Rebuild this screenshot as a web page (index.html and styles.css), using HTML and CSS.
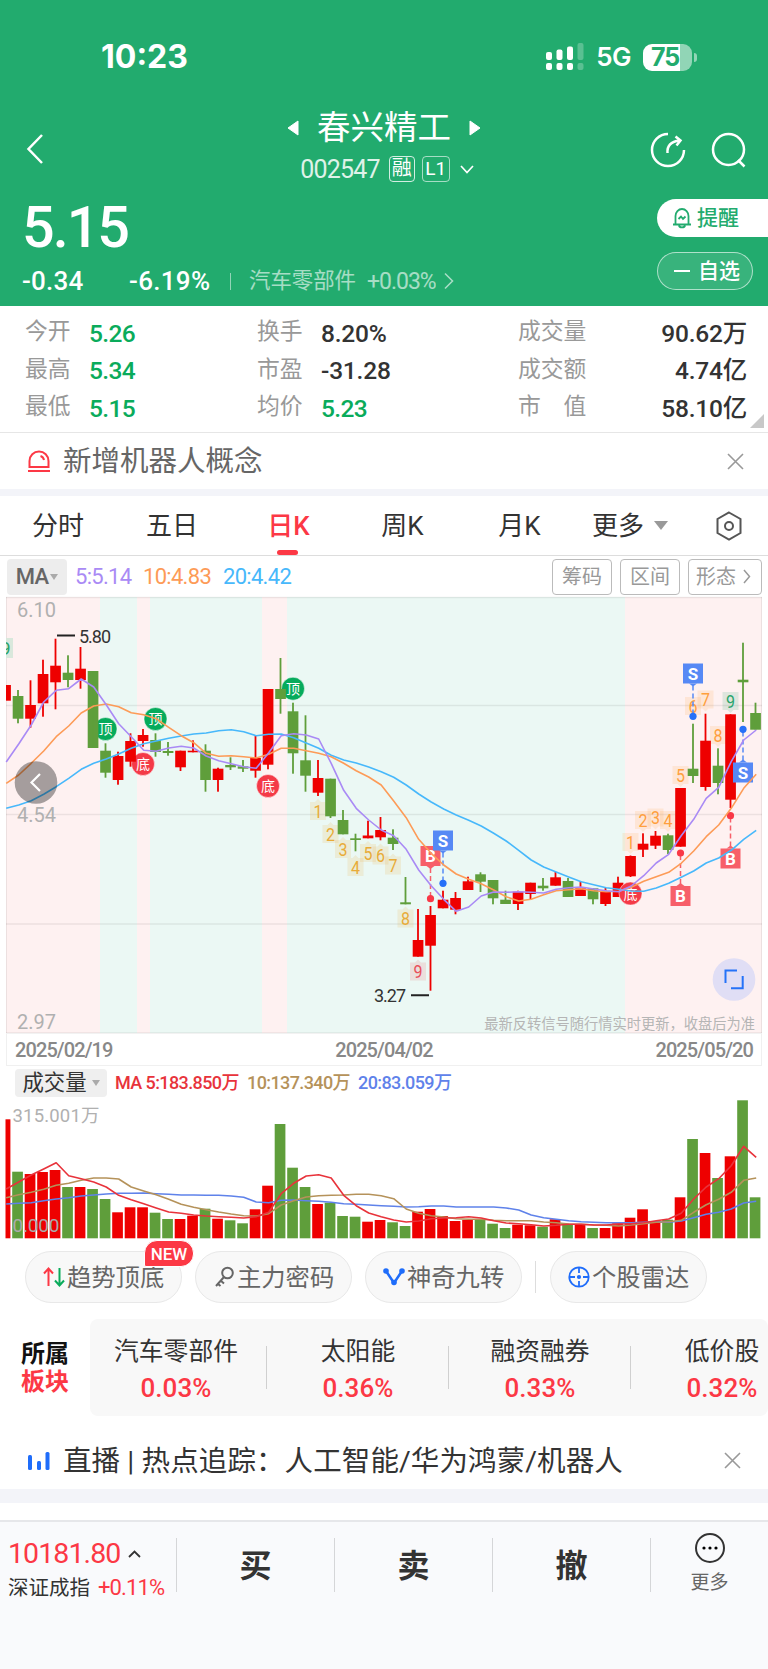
FILE: index.html
```
<!DOCTYPE html>
<html lang="zh-CN">
<head>
  <meta charset="UTF-8">
  <meta name="viewport" content="width=device-width, initial-scale=1.0">
  <title>春兴精工 002547</title>
  <link rel="stylesheet" href="styles.css">
</head>
<body>
  <header class="header">
    <div class="status-bar">
      <span class="clock">10:23</span>
      <div class="status-icons">
        <svg class="signal" width="38" height="28" viewBox="0 0 38 28" fill="#fff">
          <rect x="0" y="9" width="6" height="8" rx="2"/><rect x="0" y="20" width="6" height="7" rx="2"/>
          <rect x="10.5" y="6.500" width="6" height="10.500" rx="2"/><rect x="10.500" y="20" width="6" height="7" rx="2"/>
          <rect x="21" y="3.500" width="6" height="13.500" rx="2"/><rect x="21" y="20" width="6" height="7" rx="2"/>
          <g opacity=".25"><rect x="31.500" y="0" width="6" height="17" rx="2"/><rect x="31.500" y="20" width="6" height="7" rx="2"/></g>
        </svg>
        <span class="network">5G</span>
        <div class="battery">75</div>
      </div>
    </div>

    <div class="nav">
      <svg class="back" width="18" height="32" viewBox="0 0 18 32"><path d="M16 2L2.500 16L16 30"/></svg>
      <div class="stock">
        <div class="stock-name">
          <svg width="12" height="16" viewBox="0 0 12 16"><path d="M11 1v14L1 8z"/></svg>
          <span>春兴精工</span>
          <svg width="12" height="16" viewBox="0 0 12 16"><path d="M1 1v14L11 8z"/></svg>
        </div>
        <div class="stock-code">
          <span class="code">002547</span>
          <span class="tag">融</span>
          <span class="tag tag-level">L1</span>
          <svg width="14" height="9" viewBox="0 0 14 9"><path d="M1 1l6 6.500L13 1"/></svg>
        </div>
      </div>
      <div class="nav-actions">
        <svg width="36" height="36" viewBox="0 0 36 36"><path d="M18 2A16 16 0 1 0 34 18M17.500 21c-.5-7 3-11.500 12-12.500M25.500 4.500l5 4-4 5"/></svg>
        <svg width="36" height="36" viewBox="0 0 36 36"><circle cx="17.500" cy="17.500" r="15.500"/><path d="M27 28l6.500 6.500"/></svg>
      </div>
    </div>

    <div class="quote">
      <div class="quote-main">
        <div class="price">5.15</div>
        <div class="change">
          <span class="diff">-0.34</span>
          <span class="percent">-6.19%</span>
          <span class="bar"></span>
          <span class="industry">汽车零部件</span>
          <span class="industry-change">+0.03%</span>
          <svg width="10" height="18" viewBox="0 0 10 18"><path d="M1 1.500l7.500 7.500L1 16.500"/></svg>
        </div>
      </div>
      <div class="quote-actions">
        <div class="btn-alert">
          <svg width="20" height="22" viewBox="0 0 20 22"><path d="M1 17.500h18M3.500 17V9a6.500 7 0 0 1 13 0v8M7 18.500c.5 2.500 5.500 2.500 6 0M6.500 12l2.500-2.500 2 2.500 2.500-2.500"/></svg>提醒
        </div>
        <div class="btn-watch"><i></i>自选</div>
      </div>
    </div>
  </header>

  <section class="stats">
    <span>今开</span><b class="down">5.26</b><span>换手</span><b>8.20%</b><span>成交量</span><b>90.62万</b>
    <span>最高</span><b class="down">5.34</b><span>市盈</span><b>-31.28</b><span>成交额</span><b>4.74亿</b>
    <span>最低</span><b class="down">5.15</b><span>均价</span><b class="down">5.23</b><span>市　值</span><b>58.10亿</b>
  </section>

  <section class="notice">
    <svg class="notice-icon" width="22" height="22" viewBox="0 0 22 22" fill="none" stroke="#fc3845" stroke-width="2"><path d="M1.500 17v-6a9.500 9.500 0 0 1 19 0v6zM0 21h22M12.500 6q3 1 3.500 4"/></svg>
    <span>新增机器人概念</span>
    <svg class="close" width="17" height="17" viewBox="0 0 17 17"><path d="M1 1l15 15M16 1L1 16"/></svg>
  </section>

  <nav class="tabs">
    <a>分时</a><a>五日</a><a class="active">日K</a><a>周K</a><a>月K</a>
    <a class="more">更多<i class="caret"></i></a>
    <svg width="26" height="30" viewBox="0 0 26 30"><path d="M13 1.500L24.500 8v14L13 28.500 1.500 22V8z"/><circle cx="13" cy="15" r="4"/></svg>
  </nav>

  <section class="ma-bar">
    <span class="ma-select">MA<i class="caret"></i></span>
    <span class="ma5">5:5.14</span>
    <span class="ma10">10:4.83</span>
    <span class="ma20">20:4.42</span>
    <div class="ma-tools">
      <span>筹码</span><span>区间</span>
      <span>形态<svg width="8" height="15" viewBox="0 0 8 15"><path d="M1 1l5.500 6.500L1 14"/></svg></span>
    </div>
  </section>

  <svg id="kline" class="kline" width="768" height="438" viewBox="0 596 768 438"></svg>

  <div class="dates"><span>2025/02/19</span><span>2025/04/02</span><span>2025/05/20</span></div>

  <section class="volume">
    <div class="volume-head">
      <span class="volume-select">成交量<i class="caret"></i></span>
      <span class="vol5">MA 5:183.850万</span>
      <span class="vol10">10:137.340万</span>
      <span class="vol20">20:83.059万</span>
    </div>
    <svg id="volume" width="768" height="140" viewBox="0 1099 768 140"></svg>
  </section>

  <section class="tools">
    <div class="tool">
      <svg width="22" height="22" viewBox="0 0 22 22" fill="none" stroke-width="2"><path stroke="#fc3845" d="M5.500 20V3M1 7.500L5.500 2.500 10 7.500"/><path stroke="#0aab5b" d="M16.500 2v17M12 14.500l4.500 5 4.500-5"/></svg><span>趋势顶底</span>
      <em class="new">NEW</em>
    </div>
    <div class="tool">
      <svg width="20" height="22" viewBox="0 0 20 22" fill="none" stroke="#666" stroke-width="2"><circle cx="12.500" cy="7" r="5.300"/><path d="M9 11L1 20M5.500 14.500l3.500 3M2.500 17.500l3 2.500"/></svg><span>主力密码</span>
    </div>
    <div class="tool">
      <svg width="22" height="20" viewBox="0 0 22 20" fill="#1f6dfa"><path d="M3 4l8 12 8-12" fill="none" stroke="#1f6dfa" stroke-width="2.500"/><circle cx="3" cy="4" r="2.800"/><circle cx="19" cy="4" r="2.800"/><circle cx="11" cy="15.500" r="2.800"/></svg><span>神奇九转</span>
    </div>
    <i class="split"></i>
    <div class="tool">
      <svg width="22" height="22" viewBox="0 0 22 22" fill="none" stroke="#1f6dfa" stroke-width="1.800"><circle cx="11" cy="11" r="9.700"/><path d="M11 1v6M11 15v6M1 11h6M15 11h6"/><circle cx="11" cy="11" r="1.200" fill="#1f6dfa"/></svg><span>个股雷达</span>
    </div>
  </section>

  <section class="sectors">
    <div class="sectors-title">所属<br><span>板块</span></div>
    <div class="sectors-list">
      <div class="sector">汽车零部件<b>0.03%</b></div>
      <div class="sector">太阳能<b>0.36%</b></div>
      <div class="sector">融资融券<b>0.33%</b></div>
      <div class="sector">低价股<b>0.32%</b></div>
    </div>
  </section>

  <section class="notice live">
    <svg class="notice-icon" width="22" height="18" viewBox="0 0 22 18" fill="#1f6dfa"><rect x="0" y="3" width="4" height="15" rx="1.500"/><rect x="9" y="9" width="4" height="9" rx="1.500"/><rect x="17.500" y="0" width="4" height="18" rx="1.500"/></svg>
    <span>直播 | 热点追踪：人工智能/华为鸿蒙/机器人</span>
    <svg class="close" width="17" height="17" viewBox="0 0 17 17"><path d="M1 1l15 15M16 1L1 16"/></svg>
  </section>

  <footer class="footer">
    <div class="index">
      <div class="index-value">10181.80<svg width="13" height="8" viewBox="0 0 13 8"><path d="M1 7l5.500-5.500L12 7"/></svg></div>
      <div class="index-name">深证成指<span>+0.11%</span></div>
    </div>
    <div class="trade">买</div>
    <div class="trade">卖</div>
    <div class="trade">撤</div>
    <div class="footer-more">
      <svg width="32" height="32" viewBox="0 0 32 32"><circle cx="16" cy="16" r="14" fill="none" stroke="#333" stroke-width="2"/><circle cx="10" cy="16" r="1.600"/><circle cx="16" cy="16" r="1.600"/><circle cx="22" cy="16" r="1.600"/></svg>
      更多
    </div>
  </footer>

  <script>
    const RED = '#ee0000', GREEN = '#5f9e3b';
    const px = i => 5.5 + 12.5 * i;

    // [color, body top, body bottom, high, low]
    const candles = [
      ['r',685,700.7,685,700.7],['g',696,718.7,690,723.3],['r',705,718.7,680.3,727.7],['r',674,703.3,659.7,716.7],
      ['r',665.7,682.3,638.7,709.3],['g',672.7,680,655.3,687.3],['r',668.7,680,647,688.7],['g',671,748,671,748],
      ['g',750.7,772.7,743.3,777.7],['r',756,780,751.7,784.7],['r',741,761.7,733.3,766.7],['r',735,741,729,746.7],
      ['g',740,752,733.3,756.7],['g',751,753,742,755.7],['r',750.7,767.3,750.7,771],['r',750.7,752.3,740.3,752.3],
      ['g',750.7,780,744.3,791.7],['r',768.7,780,767.7,791.7],['g',765,767.3,757.3,770],['g',766.3,768.7,760,772],
      ['r',758,770.7,736,777.7],['r',689,764.7,689,769.3],['g',689,699,658,713.7],['g',711.3,753.3,702.7,773.7],
      ['g',760.3,775.7,715.3,791.7],['r',778,792.7,760,796],['g',778.7,816.3,778.7,818],['g',820,834.3,810,834.3],
      ['g',838.3,840,833.7,851.3],['r',835.5,838.3,820.7,838.3],['r',830,837.3,817,840.3],['g',837.7,844,829.3,850],
      ['g',902.3,904.3,877,904.3],['r',940,956.7,909,956.7],['r',915,945.7,906,990.7],['r',899.7,908.3,890.7,908.3],
      ['r',898,909.7,892,914.3],['r',881.3,890,876.7,890],['g',874.3,881.7,872.3,892],['g',880,898.3,880,904.3],
      ['g',899.7,904,890.7,904],['r',891.7,904,890.7,910],['r',882.7,894,882.7,899.3],['g',885.7,888.3,878,890.7],
      ['r',877.3,885.7,872,885.7],['g',881,897,878,897],['r',888.3,896,881.3,896],['g',888.3,899.3,888.3,904.3],
      ['r',891.7,904,888,906],['r',882.7,897,876.7,897],['r',856,876.3,855.5,877],['r',843.7,849.7,833.3,857],
      ['r',835.7,845.7,831,849],['g',835.3,850,833.7,854],['r',788,846.7,788,846.7],['g',768.7,776,723.7,783],
      ['r',740.7,787,713.7,790.7],['g',765.7,783,748.3,794.3],['r',714.3,799.7,714.3,808],['g',679.7,682.3,642.7,722],
      ['g',713,729.7,702.7,729.7]
    ];
    const ma5 = [762,744,725,702,690.3,688.7,679,687,704.7,723.7,736.7,750.3,751.3,748,746.3,748,756,760.7,763.7,766.7,768.3,752.7,735.7,733.7,735,739,763.3,790.3,808.3,820,830,835.7,849.3,870,885.7,899.3,911.3,907,896,892,892.3,891.7,892.3,893,889.3,887.7,887,889,890.7,891.7,886,875.7,863,854.3,835.7,819.3,798.3,787.3,761.7,740,730];
    const ma10 = [783.3,775,763.3,751,736.7,726,713,706,704,706.7,712.7,714.7,718.7,727.3,735.7,742.7,753.3,756.3,755.7,756.7,758,754.3,748.3,748.3,750.7,753.3,756.7,763.3,770.7,777,785,801,817.7,839.3,853.3,865,874,879.3,883.7,890,896.7,901,899.3,894.7,890.7,889.7,888.7,890.7,891.7,891.3,887.3,881.3,876.7,872.3,863.3,851,836.7,825,808.3,788.3,774.3];
    const ma20 = [808.3,805,800.7,794.3,786.7,778.3,769.3,763.3,759,754,748.3,743.7,741,738.3,736,734,733,730.7,729.7,731.7,735.7,734.3,734,737.7,743,748.3,755.3,760,763,767,771.7,777.3,785,794,802,809,815,820.3,826,833.3,841,850.3,860,867,872,877,881.7,884.7,887.7,889.3,891,891.3,888,883.3,877.3,871,863,858,850.3,839.3,830.3];

    const line = (ys, color) => `<polyline points="${ys.map((y, i) => (px(i) + 0.7) + ',' + y).join(' ')}" fill="none" stroke="${color}" stroke-width="1.6" stroke-linejoin="round"/>`;
    const text = (x, y, s, size, color, extra = '') => `<text x="${x}" y="${y}" font-size="${size}" fill="${color}" ${extra}>${s}</text>`;
    const mid = 'text-anchor="middle"';

    let k = '';
    [[6,99.5,0],[99.5,137,1],[137,149.5,0],[149.5,261.7,1],[261.7,287,0],[287,624.5,1],[624.5,762,0]].forEach(([a, b, g]) => {
      k += `<rect x="${a}" y="597" width="${b - a}" height="436" fill="${g ? '#ebf8f4' : '#fef1f1'}" shape-rendering="crispEdges"/>`;
    });
    [597.5, 705.5, 814.5, 924, 1033].forEach(y => k += `<path d="M6 ${y}H762" stroke="#000" stroke-opacity=".07" stroke-width="1.5"/>`);
    k += '<path d="M6.500 597V1033M761.500 597V1033" stroke="#000" stroke-opacity=".07"/>';
    k += text(17, 617, '6.10', 20, '#b0b0b0') + text(17, 822, '4.54', 20, '#b0b0b0') + text(17, 1028.5, '2.97', 20, '#b0b0b0');
    k += text(755, 1029, '最新反转信号随行情实时更新，收盘后为准', 14.25, '#b5b5b5', 'text-anchor="end"');

    // top / bottom signals
    const round = (x, y, s) => `<circle cx="${x}" cy="${y}" r="11.500" fill="${s === '底' ? '#f43a47' : '#06ab5c'}" stroke="#fff" stroke-opacity=".5"/>` + text(x, y + 5, s, 14, '#fff', mid);
    k += round(105.5, 729, '顶') + round(155.5, 719, '顶') + round(143, 764, '底') + round(268, 786, '底') + round(293, 688.7, '顶');

    // nine-turn numbers
    const turn = (i, y, s, color, up) => {
      const x = px(i);
      return `<path d="M${x - 8} ${y - 9}h16v18h-16z" fill="${color}" fill-opacity=".15"/><path d="M${x - 3} ${up ? y - 9 : y + 9}l3 ${up ? -3 : 3} 3 ${up ? 3 : -3}z" fill="${color}" fill-opacity=".15"/>` + text(x - 4.5, y + 6.8, s, 18.5, color, 'textLength="9" lengthAdjust="spacingAndGlyphs"');
    };
    [[25,811],[26,834],[27,849],[28,867],[29,853],[30,855.5],[31,865.5],[32,918.5]].forEach(([i, y], n) => k += turn(i, y, n + 1, '#e8ab38', 1));
    k += turn(33, 971.5, 9, '#e8505a', 1);
    [[50,842],[51,820],[52,817.5],[53,820],[54,775],[55,706],[56,699.5],[57,735]].forEach(([i, y], n) => k += turn(i, y, n + 1, '#ff9f3d', 0));
    k += turn(58, 701, 9, '#2aa46c', 0);
    k += '<path d="M6 638h7v20H6z" fill="#d9e8dc"/><svg x="6" y="630" width="10" height="34">' + '<text x="-6" y="25" font-size="19" fill="#2aa46c">9</text></svg>';

    candles.forEach(([c, top, bottom, high, low], i) => {
      const color = c === 'r' ? RED : GREEN;
      const left = Math.max(6, px(i) - 5.3);
      k += `<rect x="${left}" y="${top}" width="${px(i) + 5.4 - left}" height="${bottom - top}" fill="${color}"/>`;
      if (i) k += `<rect x="${px(i) - 0.9}" y="${high}" width="1.800" height="${low - high}" fill="${color}"/>`;
    });
    k += round(630.5, 893.5, '底');

    // buy / sell flags
    const flag = (i, y, dot, s) => {
      const x = px(i), color = s === 'S' ? '#5689f5' : '#f75f69', dir = dot > y ? 1 : -1;
      return `<path d="M${x} ${y + dir * 12}V${dot}" stroke="${color}" stroke-width="1.500" stroke-dasharray="5 3"/>` +
        `<circle cx="${x}" cy="${dot}" r="3.600" fill="${s === 'S' ? '#2670f8' : '#f93846'}"/>` +
        `<rect x="${x - 10}" y="${y - 10}" width="20" height="20" fill="${color}"/><path d="M${x - 4} ${y + dir * 10}l4 ${dir * 3} 4 ${-dir * 3}z" fill="${color}"/>` +
        text(x, y + 6, s, 17, '#fff', mid + ' font-weight="700"');
    };
    k += flag(34, 856, 898.7, 'B') + flag(35, 840.5, 883.3, 'S') + flag(54, 896, 853, 'B') + flag(55, 673.5, 716.3, 'S') + flag(58, 858.5, 815.7, 'B') + flag(59, 772.5, 729.3, 'S');

    k += line(ma20, '#47b8fb') + line(ma10, '#fd9b57') + line(ma5, '#a98af5');
    k += '<path d="M57 635.500h18M411 995.300h18" stroke="#222" stroke-width="2"/>';
    k += text(79, 643, '5.80', 18, '#333', 'textLength="32"') + text(374, 1002, '3.27', 18, '#333', 'textLength="32"');
    k += '<circle cx="36" cy="782.500" r="21.300" fill="#000" fill-opacity=".35"/><path d="M40 774l-8.500 8.500 8.500 8.500" fill="none" stroke="#fff" stroke-width="2.200"/>';
    k += '<circle cx="734" cy="979.500" r="21.300" fill="#e0def5"/><path d="M725.500 983v-12.500H737M742.700 976v12.200H731" fill="none" stroke="#2472f8" stroke-width="2"/>';
    document.getElementById('kline').innerHTML = k;

    const bars = [1119.3,1171.7,1174,1172,1170,1187,1187,1189,1199,1212.3,1207.3,1207.3,1212.7,1219,1219,1215.7,1208.7,1218.7,1220.3,1223.3,1209.3,1185.7,1124,1167.7,1187,1204,1202.7,1216,1216.7,1221.7,1220,1222.3,1226,1211.7,1209,1216,1221,1220,1219.7,1223.7,1228,1224.7,1225.3,1226.7,1219.3,1224.3,1224.7,1228,1228,1223.3,1217.7,1209.3,1221,1219.7,1197.3,1139,1153,1178,1156.3,1100.3,1197.3];
    const vol5 = [1189,1182,1175,1169,1162.7,1175.7,1178.7,1182,1187,1195.3,1199.7,1203.7,1208,1212,1213.3,1215,1216,1216.7,1217.3,1218,1216.7,1212.3,1193.7,1183.3,1176,1174.7,1178,1195.3,1205.7,1213,1216.7,1220,1222,1221,1218.7,1218,1217.7,1216.7,1218,1220.7,1223,1223.7,1224.7,1226,1225.3,1224.3,1224.3,1225,1225,1224,1223.7,1222.7,1220.7,1219,1213.3,1199,1187,1178.7,1165.7,1146.3,1157.3];
    const vol10 = [1197.7,1194.7,1192.3,1189.3,1185.3,1183.3,1180.3,1178,1178,1179,1187,1191,1194.7,1199.3,1204.3,1207.3,1209.7,1212,1214,1215.7,1216,1213.7,1205,1200.7,1197,1195.7,1195.3,1195,1194.3,1194.3,1195.7,1198.7,1209,1213.3,1215.7,1217,1218.7,1219.3,1219.3,1220.3,1220.7,1220.7,1220.7,1222,1222.7,1224,1224.3,1225,1225.3,1226,1225,1223.7,1222.3,1221.7,1220.3,1212.3,1204.7,1199.3,1192.3,1180.3,1178];
    const vol20 = [1204,1203.3,1202.7,1200.7,1199,1197.7,1196,1195,1194,1193.3,1193.3,1193,1193.7,1194.3,1195,1195,1195.3,1195.3,1196,1197.3,1202,1202.7,1200.3,1200,1200.7,1201.3,1202.3,1203.7,1204.3,1205,1205.7,1206.3,1207,1206.7,1206,1206,1207,1207,1207,1207,1208,1210,1215,1217.7,1219.3,1220.7,1221.7,1222.3,1222.7,1222.7,1222.7,1222.3,1221.7,1222.3,1221,1217.7,1214.3,1212.3,1209,1203,1201.3];
    let v = '';
    bars.forEach((y, i) => {
      const left = Math.max(5.5, px(i) - 5.8);
      // volume bars share the candle colors
      v += `<rect x="${left}" y="${y}" width="${px(i) + 4.9 - left}" height="${1238.3 - y}" fill="${candles[i][0] === 'r' ? RED : GREEN}"/>`;
    });
    v += line(vol20, '#5f82ea') + line(vol10, '#b5925a') + line(vol5, '#e8333b');
    v += text(12.5, 1121.5, '315.001万', 18.5, '#b0b0b0', 'textLength="87"') + text(12.5, 1231.5, '0.000', 19, '#aaa', 'textLength="47"');
    document.getElementById('volume').innerHTML = v;
  </script>
</body>
</html>
```

FILE: styles.css
```
* {
  box-sizing: border-box;
}
body {
  margin: 0;
  width: 768px;
  background: #fff;
  color: #333;
  font-family: Roboto, "Noto Sans CJK SC", sans-serif;
  line-height: 1;
}
svg {
  display: block;
  flex: none;
}
svg text {
  font-family: Roboto, "Noto Sans CJK SC", sans-serif;
}
b, em, i {
  font-style: normal;
  font-weight: 500;
}
.caret {
  border: 4.5px solid transparent;
  border-top: 6px solid #aaa;
  border-bottom: 0;
}

/* header */
.header {
  height: 306px;
  background: #22ab6e;
  color: #fff;
}
.status-bar {
  height: 104px;
  padding: 10px 76px 0 101px;
  display: flex;
  align-items: center;
  justify-content: space-between;
  font-family: Inter, sans-serif;
}
.clock {
  font-size: 32px;
  font-weight: 700;
}
.status-icons {
  display: flex;
  align-items: center;
}
.network {
  margin: 0 12px 0 12px;
  font-size: 26px;
  font-weight: 600;
  letter-spacing: -0.5px;
}
.battery {
  position: relative;
  width: 49px;
  height: 27px;
  padding-left: 8px;
  border-radius: 9px;
  background: linear-gradient(90deg, #fff 75%, #91d5b6 75%);
  color: #22ab6e;
  font-size: 25px;
  font-weight: 700;
  line-height: 27px;
  letter-spacing: -1px;
}
.battery::after {
  content: "";
  position: absolute;
  left: 51px;
  top: 9px;
  width: 3px;
  height: 9px;
  border-radius: 0 3px 3px 0;
  background: #91d5b6;
}
.nav {
  height: 88px;
  padding: 0 21px 0 26px;
  display: grid;
  grid-template-columns: 117px 1fr 122px;
}
.nav svg {
  fill: none;
  stroke: #fff;
  stroke-width: 2.5;
}
.back {
  margin-top: 29px;
}
.stock-name {
  height: 46px;
  padding-top: 1px;
  display: flex;
  align-items: center;
  justify-content: center;
  gap: 18px;
  font-size: 33.5px;
}
.stock-name svg {
  fill: #fff;
  stroke-width: 1;
}
.stock-code {
  height: 36px;
  padding: 2px 0 0 6px;
  display: flex;
  align-items: center;
  justify-content: center;
  font-size: 25px;
}
.code {
  letter-spacing: -0.8px;
  opacity: .85;
}
.tag {
  width: 26px;
  height: 26px;
  margin-left: 9px;
  border: 1.5px solid rgba(255, 255, 255, .8);
  border-radius: 4px;
  font-size: 20px;
  line-height: 23px;
  text-align: center;
}
.tag-level {
  width: 28px;
  margin-left: 7px;
  border-color: rgba(255, 255, 255, .6);
  font-size: 19px;
}
.stock-code svg {
  margin-left: 10px;
  stroke-width: 1.7;
}
.nav-actions {
  display: flex;
  justify-content: flex-end;
  gap: 25px;
  padding-top: 28px;
}
.quote {
  display: flex;
  justify-content: space-between;
}
.price {
  height: 68px;
  padding-left: 22px;
  font-size: 57.5px;
  font-weight: 500;
  line-height: 71px;
  letter-spacing: -2px;
}
.change {
  height: 40px;
  padding: 2px 0 0 22px;
  display: flex;
  align-items: center;
  font-size: 26px;
}
.diff {
  width: 107px;
  font-weight: 500;
  letter-spacing: .2px;
}
.percent {
  width: 101px;
  font-weight: 500;
  letter-spacing: .3px;
}
.bar {
  width: 1px;
  height: 17px;
  margin-right: 18px;
  background: rgba(255, 255, 255, .5);
}
.industry {
  font-size: 21.4px;
  opacity: .6;
}
.industry-change {
  margin: 0 8px 0 11px;
  font-size: 23px;
  letter-spacing: -1px;
  opacity: .6;
}
.change svg {
  fill: none;
  stroke: #fff;
  stroke-width: 1.6;
  opacity: .6;
}
.quote-actions {
  width: 111px;
  padding-top: 7px;
  font-size: 21px;
  font-weight: 500;
}
.btn-alert {
  height: 38px;
  padding-left: 15px;
  display: flex;
  align-items: center;
  gap: 5px;
  border-radius: 19px 0 0 19px;
  background: #fff;
  color: #22ab6e;
}
.btn-alert svg {
  fill: none;
  stroke: #22ab6e;
  stroke-width: 1.8;
}
.btn-watch {
  width: 96px;
  height: 38px;
  margin-top: 15px;
  padding-left: 16px;
  display: flex;
  align-items: center;
  gap: 8px;
  border: 1px solid rgba(255, 255, 255, .6);
  border-radius: 19px;
  background: rgba(255, 255, 255, .1);
}
.btn-watch i {
  width: 16px;
  height: 2px;
  background: #fff;
}

/* quote stats */
.stats {
  position: relative;
  height: 127px;
  padding: 8px 21px 0 25px;
  display: grid;
  grid-template-columns: 64px 168px 64px 197px 80px 1fr;
  grid-template-rows: repeat(3, 37.5px);
  align-items: center;
  border-bottom: 1px solid #e6e6e6;
  font-size: 22.8px;
}
.stats span {
  color: #999;
}
.stats b {
  padding-top: 2px;
  font-size: 24.5px;
  letter-spacing: -.2px;
}
.stats b:nth-child(6n) {
  text-align: right;
}
.stats .down {
  color: #0aab5b;
  letter-spacing: -.6px;
}
.stats::after {
  content: "";
  position: absolute;
  right: 4px;
  bottom: 4px;
  border-left: 14px solid transparent;
  border-bottom: 14px solid #c8c8c8;
}

/* notices */
.notice {
  height: 63px;
  padding: 0 24px 0 28px;
  display: flex;
  align-items: center;
  border-bottom: 7px solid #f3f4f9;
  color: #666;
  font-size: 28.5px;
}
.notice span {
  padding-top: 3px;
}
.notice-icon {
  margin-right: 13px;
}
.close {
  margin-left: auto;
  fill: none;
  stroke: #999;
  stroke-width: 1.6;
}

/* period tabs */
.tabs {
  position: relative;
  height: 60px;
  display: grid;
  grid-template-columns: 116px 112px 121px 107px 127px 108px 77px;
  align-items: center;
  border-bottom: 1px solid #ddd;
  font-size: 26px;
}
.tabs a {
  text-align: center;
}
.tabs .active {
  position: relative;
  color: #fc3845;
  font-weight: 500;
}
.active::after {
  content: "";
  position: absolute;
  left: 49px;
  bottom: -16px;
  width: 21px;
  height: 5px;
  border-radius: 3px;
  background: #fc3845;
}
.tabs .more {
  display: flex;
  align-items: center;
  gap: 10px;
  padding-left: 9px;
}
.more .caret {
  border-width: 9px 7px 0;
  border-top-color: #999;
}
.tabs svg {
  margin-left: 25px;
  fill: none;
  stroke: #555;
  stroke-width: 2;
}

.ma-bar {
  height: 40px;
  padding: 1px 6px 0 7px;
  display: flex;
  align-items: center;
  font-size: 22px;
  letter-spacing: -.7px;
}
.ma-select {
  width: 60px;
  height: 36px;
  margin-right: 8px;
  display: flex;
  align-items: center;
  justify-content: center;
  gap: 2px;
  border-radius: 4px;
  background: #ededed;
  color: #666;
  font-weight: 500;
}
.ma5 {
  width: 68px;
  color: #a98af5;
}
.ma10 {
  width: 80px;
  color: #fd9b57;
}
.ma20 {
  color: #47b8fb;
}
.ma-tools {
  margin-left: auto;
  display: flex;
  gap: 8px;
  font-size: 20px;
  letter-spacing: 0;
}
.ma-tools span {
  height: 36px;
  padding: 0 9px;
  display: flex;
  align-items: center;
  border: 1.5px solid #bbb;
  border-radius: 4px;
  color: #999;
}
.ma-tools span:last-child {
  padding: 0 10px 0 7px;
}
.ma-tools svg {
  margin-left: 7px;
  fill: none;
  stroke: #999;
  stroke-width: 1.5;
}

.dates {
  height: 32px;
  margin: 0 6px;
  padding: 0 8px;
  display: flex;
  align-items: center;
  justify-content: space-between;
  border: 1px solid #f0f0f0;
  border-top: 0;
  color: #888;
  font-size: 20px;
  font-weight: 500;
  letter-spacing: -.9px;
}

/* volume */
.volume-head {
  height: 33px;
  padding: 1px 0 0 15px;
  display: flex;
  align-items: center;
  font-size: 18px;
  font-weight: 500;
  letter-spacing: -.6px;
}
.volume-select {
  width: 92px;
  height: 28px;
  margin-right: 8px;
  display: flex;
  align-items: center;
  justify-content: center;
  gap: 5px;
  border-radius: 4px;
  background: #efefef;
  font-size: 21.4px;
  font-weight: 400;
  letter-spacing: 0;
}
.vol5 {
  width: 132px;
  color: #e8333b;
}
.vol10 {
  width: 111px;
  color: #b5925a;
}
.vol20 {
  color: #5f82ea;
}

/* tool pills */
.tools {
  height: 80px;
  padding: 12px 0 0 25px;
  display: flex;
  gap: 13px;
}
.tool {
  position: relative;
  width: 157px;
  height: 52px;
  padding-left: 17px;
  display: flex;
  align-items: center;
  gap: 2px;
  border: 1px solid #e8e8e8;
  border-radius: 26px;
  background: #f8f8f8;
  color: #666;
  font-size: 24.3px;
  white-space: nowrap;
}
.tool span {
  padding-top: 2px;
}
.tool:nth-child(2) {
  padding-left: 19px;
}
.new {
  position: absolute;
  left: 118px;
  top: -12px;
  width: 50px;
  height: 27px;
  border: 1px solid #fff;
  border-radius: 13px 13px 13px 2px;
  background: #fc3845;
  color: #fff;
  font-size: 17px;
  line-height: 26px;
  text-align: center;
}
.split {
  width: 1px;
  height: 32px;
  margin: 10px 1px 0 0;
  background: #ddd;
}

/* sectors */
.sectors {
  height: 97px;
  display: flex;
}
.sectors-title {
  width: 90px;
  padding: 21px 0 0 21px;
  color: #111;
  font-size: 24px;
  font-weight: 700;
  line-height: 28px;
}
.sectors-title span {
  color: #fc3845;
}
.sectors-list {
  width: 678px;
  display: flex;
  overflow: hidden;
  border-radius: 8px;
  background: #f8f8f8;
}
.sector {
  position: relative;
  flex: none;
  width: 182px;
  margin-left: -5px;
  margin-right: 5px;
  padding: 21px 0 0;
  text-align: center;
  font-size: 24.8px;
}
.sector b {
  display: block;
  margin-top: 10px;
  color: #fc3845;
  font-size: 26px;
  letter-spacing: .1px;
}
.sector:not(:last-child)::after {
  content: "";
  position: absolute;
  right: 0;
  top: 27px;
  width: 1px;
  height: 43px;
  background: #d0d0d0;
}
.live {
  height: 87px;
  padding: 16px 27px 0 28px;
  border-bottom-width: 14px;
  color: #333;
  letter-spacing: .1px;
}

/* footer */
.footer {
  height: 149px;
  margin-top: 17px;
  padding-top: 16px;
  display: flex;
  border-top: 2px solid #e6e7ea;
  background: #f9fafc;
}
.index {
  width: 176px;
  padding: 2px 0 0 8px;
}
.index-value {
  display: flex;
  align-items: center;
  gap: 8px;
  color: #fc3845;
  font-size: 28.5px;
  letter-spacing: -.9px;
}
.index-value svg {
  fill: none;
  stroke: #333;
  stroke-width: 1.8;
}
.index-name {
  margin-top: 8px;
  font-size: 20.5px;
  white-space: nowrap;
}
.index-name span {
  margin-left: 8px;
  color: #fc3845;
  font-size: 22px;
  letter-spacing: -.9px;
}
.trade {
  width: 158px;
  height: 54px;
  border-left: 1px solid #d5d6d8;
  font-size: 32px;
  font-weight: 700;
  line-height: 56px;
  text-align: center;
}
.footer-more {
  width: 118px;
  height: 54px;
  display: flex;
  flex-direction: column;
  align-items: center;
  gap: 9px;
  border-left: 1px solid #d5d6d8;
  color: #666;
  font-size: 19px;
}
.footer-more svg {
  margin-top: -6px;
}
```
